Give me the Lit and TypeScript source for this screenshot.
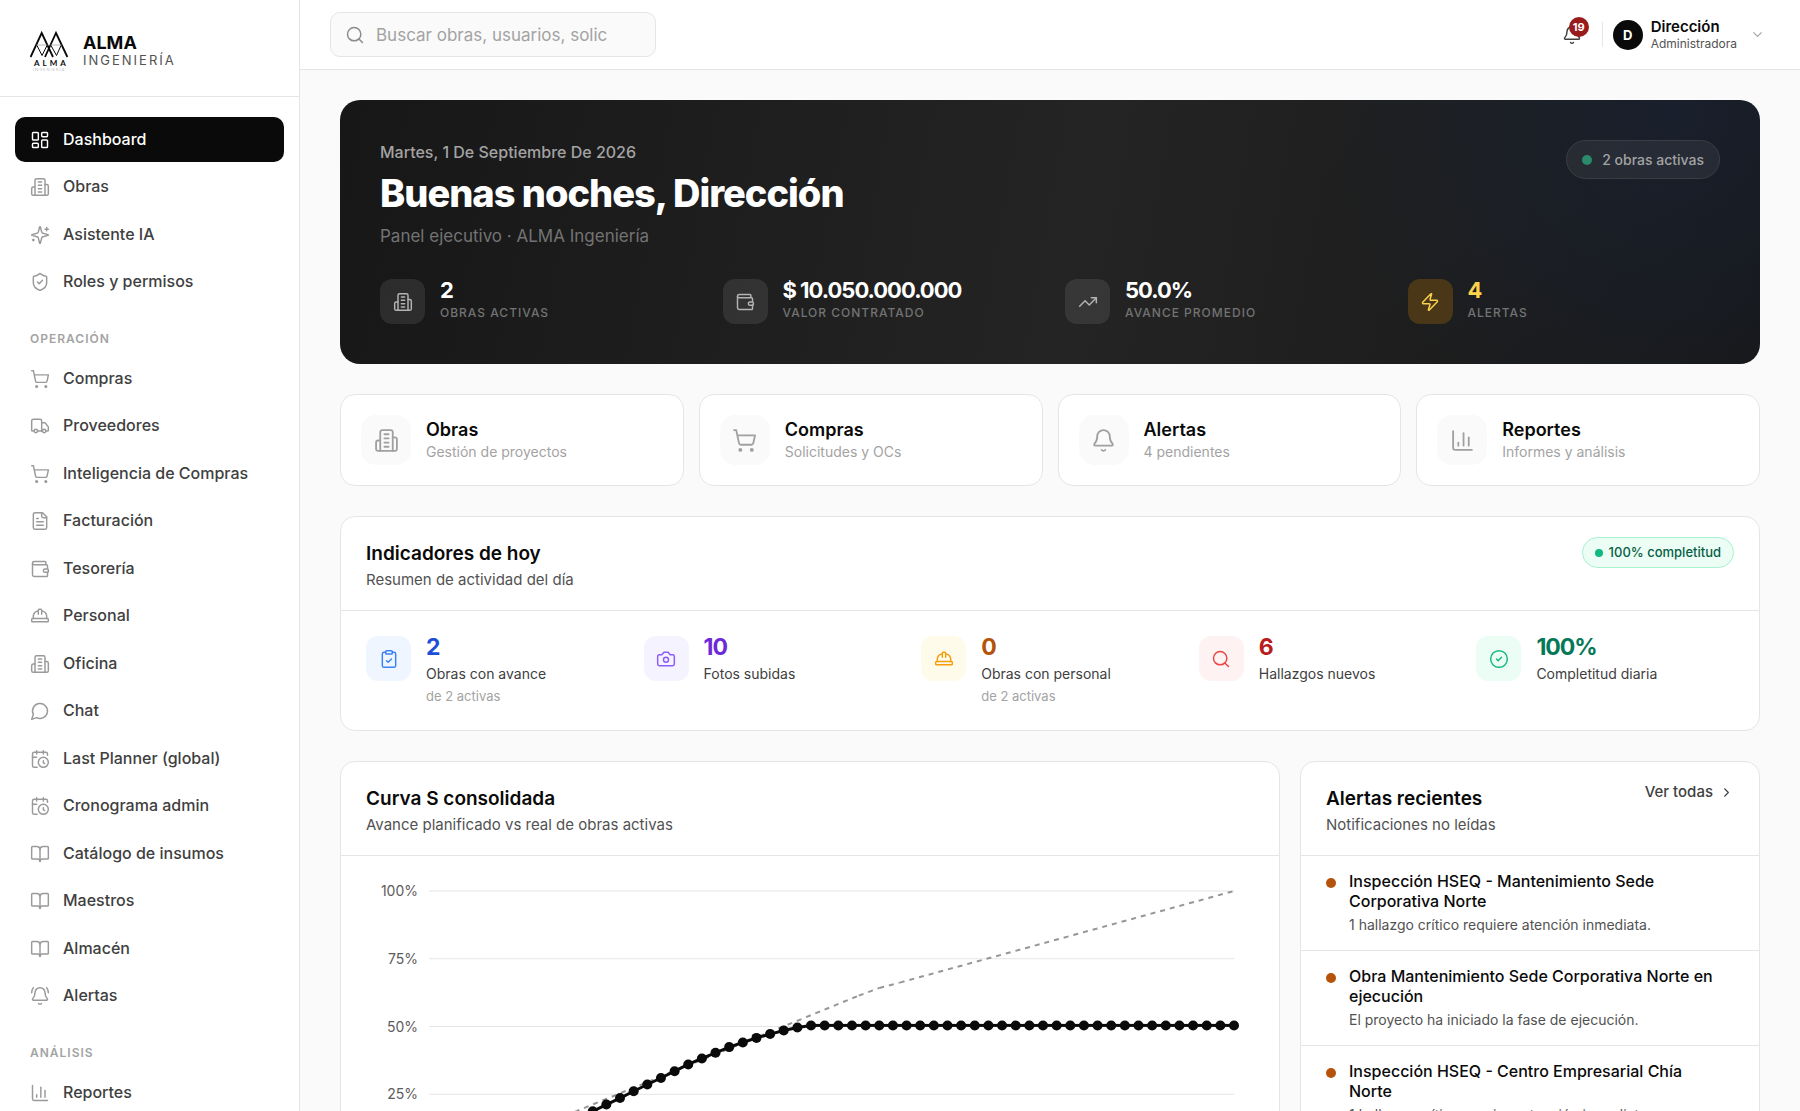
import { LitElement, html, css, svg, nothing } from "lit";
import { customElement, state } from "lit/decorators.js";
import { classMap } from "lit/directives/class-map.js";

/* ---------- Icons (24 × 24 outline set) ---------- */

const icons: Record<string, unknown> = {
  dashboard: svg`<rect width="7" height="9" x="3" y="3" rx="1"/><rect width="7" height="5" x="14" y="3" rx="1"/><rect width="7" height="9" x="14" y="12" rx="1"/><rect width="7" height="5" x="3" y="16" rx="1"/>`,
  building: svg`<path d="M6 22V4a2 2 0 0 1 2-2h8a2 2 0 0 1 2 2v18Z"/><path d="M6 12H4a2 2 0 0 0-2 2v6a2 2 0 0 0 2 2h2"/><path d="M18 9h2a2 2 0 0 1 2 2v9a2 2 0 0 1-2 2h-2"/><path d="M10 6h4"/><path d="M10 10h4"/><path d="M10 14h4"/><path d="M10 18h4"/>`,
  sparkles: svg`<path d="M9.937 15.5A2 2 0 0 0 8.5 14.063l-6.135-1.582a.5.5 0 0 1 0-.962L8.5 9.936A2 2 0 0 0 9.937 8.5l1.582-6.135a.5.5 0 0 1 .963 0L14.063 8.5A2 2 0 0 0 15.5 9.937l6.135 1.581a.5.5 0 0 1 0 .964L15.5 14.063a2 2 0 0 0-1.437 1.437l-1.582 6.135a.5.5 0 0 1-.963 0z"/><path d="M20 3v4"/><path d="M22 5h-4"/><path d="M4 17v2"/><path d="M5 18H3"/>`,
  shield: svg`<path d="M20 13c0 5-3.5 7.5-7.66 8.95a1 1 0 0 1-.67-.01C7.5 20.5 4 18 4 13V6a1 1 0 0 1 1-1c2 0 4.5-1.2 6.24-2.72a1.17 1.17 0 0 1 1.52 0C14.51 3.81 17 5 19 5a1 1 0 0 1 1 1z"/><path d="m9 12 2 2 4-4"/>`,
  cart: svg`<circle cx="8" cy="21" r="1"/><circle cx="19" cy="21" r="1"/><path d="M2.05 2.05h2l2.66 12.42a2 2 0 0 0 2 1.58h9.78a2 2 0 0 0 1.95-1.57l1.65-7.43H5.12"/>`,
  truck: svg`<path d="M14 18V6a2 2 0 0 0-2-2H4a2 2 0 0 0-2 2v11a1 1 0 0 0 1 1h2"/><path d="M15 18H9"/><path d="M19 18h2a1 1 0 0 0 1-1v-3.65a1 1 0 0 0-.22-.624l-3.48-4.35A1 1 0 0 0 17.52 8H14"/><circle cx="17" cy="18" r="2"/><circle cx="7" cy="18" r="2"/>`,
  file: svg`<path d="M15 2H6a2 2 0 0 0-2 2v16a2 2 0 0 0 2 2h12a2 2 0 0 0 2-2V7Z"/><path d="M14 2v4a2 2 0 0 0 2 2h4"/><path d="M10 9H8"/><path d="M16 13H8"/><path d="M16 17H8"/>`,
  wallet: svg`<path d="M19 7V4a1 1 0 0 0-1-1H5a2 2 0 0 0 0 4h15a1 1 0 0 1 1 1v4h-3a2 2 0 0 0 0 4h3a1 1 0 0 0 1-1v-2a1 1 0 0 0-1-1"/><path d="M3 5v14a2 2 0 0 0 2 2h15a1 1 0 0 0 1-1v-4"/>`,
  hardhat: svg`<path d="M10 10V5a1 1 0 0 1 1-1h2a1 1 0 0 1 1 1v5"/><path d="M14 6a6 6 0 0 1 6 6v3"/><path d="M4 15v-3a6 6 0 0 1 6-6"/><rect x="2" y="15" width="20" height="4" rx="1"/>`,
  chat: svg`<path d="M7.9 20A9 9 0 1 0 4 16.1L2 22Z"/>`,
  calendar: svg`<path d="M21 7.5V6a2 2 0 0 0-2-2H5a2 2 0 0 0-2 2v14a2 2 0 0 0 2 2h3.5"/><path d="M16 2v4"/><path d="M8 2v4"/><path d="M3 10h5"/><path d="M17.5 17.5 16 16.3V14"/><circle cx="16" cy="16" r="6"/>`,
  book: svg`<path d="M12 7v14"/><path d="M3 18a1 1 0 0 1-1-1V4a1 1 0 0 1 1-1h5a4 4 0 0 1 4 4 4 4 0 0 1 4-4h5a1 1 0 0 1 1 1v13a1 1 0 0 1-1 1h-6a3 3 0 0 0-3 3 3 3 0 0 0-3-3z"/>`,
  bellring: svg`<path d="M10.268 21a2 2 0 0 0 3.464 0"/><path d="M22 8c0-2.3-.8-4.3-2-6"/><path d="M3.262 15.326A1 1 0 0 0 4 17h16a1 1 0 0 0 .74-1.673C19.41 13.956 18 12.499 18 8A6 6 0 0 0 6 8c0 4.499-1.411 5.956-2.738 7.326"/><path d="M4 2C2.8 3.7 2 5.7 2 8"/>`,
  bell: svg`<path d="M10.268 21a2 2 0 0 0 3.464 0"/><path d="M3.262 15.326A1 1 0 0 0 4 17h16a1 1 0 0 0 .74-1.673C19.41 13.956 18 12.499 18 8A6 6 0 0 0 6 8c0 4.499-1.411 5.956-2.738 7.326"/>`,
  chart: svg`<path d="M3 3v16a2 2 0 0 0 2 2h16"/><path d="M18 17V9"/><path d="M13 17V5"/><path d="M8 17v-3"/>`,
  search: svg`<circle cx="11" cy="11" r="8"/><path d="m21 21-4.3-4.3"/>`,
  trend: svg`<path d="M16 7h6v6"/><path d="m22 7-8.5 8.5-5-5L2 17"/>`,
  zap: svg`<path d="M4 14a1 1 0 0 1-.78-1.63l9.9-10.2a.5.5 0 0 1 .86.46l-1.92 6.02A1 1 0 0 0 13 10h7a1 1 0 0 1 .78 1.63l-9.9 10.2a.5.5 0 0 1-.86-.46l1.92-6.02A1 1 0 0 0 11 14z"/>`,
  clipboard: svg`<rect width="8" height="4" x="8" y="2" rx="1"/><path d="M16 4h2a2 2 0 0 1 2 2v14a2 2 0 0 1-2 2H6a2 2 0 0 1-2-2V6a2 2 0 0 1 2-2h2"/><path d="m9 14 2 2 4-4"/>`,
  camera: svg`<path d="M14.5 4h-5L7 7H4a2 2 0 0 0-2 2v9a2 2 0 0 0 2 2h16a2 2 0 0 0 2-2V9a2 2 0 0 0-2-2h-3l-2.500-3z"/><circle cx="12" cy="13" r="3"/>`,
  check: svg`<circle cx="12" cy="12" r="10"/><path d="m9 12 2 2 4-4"/>`,
  down: svg`<path d="m6 9 6 6 6-6"/>`,
  right: svg`<path d="m9 18 6-6-6-6"/>`,
};

const icon = (name: string, size = "md") => html`
  <svg class="icon icon-${size}" viewBox="0 0 24 24" aria-hidden="true">${icons[name]}</svg>
`;

/* ---------- Data ---------- */

interface NavItem { label: string; icon: string; }
interface NavGroup { title?: string; items: NavItem[]; }

const NAV: NavGroup[] = [
  {
    items: [
      { label: "Dashboard", icon: "dashboard" },
      { label: "Obras", icon: "building" },
      { label: "Asistente IA", icon: "sparkles" },
      { label: "Roles y permisos", icon: "shield" },
    ],
  },
  {
    title: "Operación",
    items: [
      { label: "Compras", icon: "cart" },
      { label: "Proveedores", icon: "truck" },
      { label: "Inteligencia de Compras", icon: "cart" },
      { label: "Facturación", icon: "file" },
      { label: "Tesorería", icon: "wallet" },
      { label: "Personal", icon: "hardhat" },
      { label: "Oficina", icon: "building" },
      { label: "Chat", icon: "chat" },
      { label: "Last Planner (global)", icon: "calendar" },
      { label: "Cronograma admin", icon: "calendar" },
      { label: "Catálogo de insumos", icon: "book" },
      { label: "Maestros", icon: "book" },
      { label: "Almacén", icon: "book" },
      { label: "Alertas", icon: "bellring" },
    ],
  },
  { title: "Análisis", items: [{ label: "Reportes", icon: "chart" }] },
];

const STATS = [
  { value: "2", label: "Obras activas", icon: "building", warn: false },
  { value: "$ 10.050.000.000", label: "Valor contratado", icon: "wallet", warn: false },
  { value: "50.0%", label: "Avance promedio", icon: "trend", warn: false },
  { value: "4", label: "Alertas", icon: "zap", warn: true },
];

const QUICK = [
  { title: "Obras", text: "Gestión de proyectos", icon: "building" },
  { title: "Compras", text: "Solicitudes y OCs", icon: "cart" },
  { title: "Alertas", text: "4 pendientes", icon: "bell" },
  { title: "Reportes", text: "Informes y análisis", icon: "chart" },
];

const KPIS = [
  { value: "2", label: "Obras con avance", note: "de 2 activas", icon: "clipboard", tone: "blue" },
  { value: "10", label: "Fotos subidas", note: "", icon: "camera", tone: "violet" },
  { value: "0", label: "Obras con personal", note: "de 2 activas", icon: "hardhat", tone: "amber" },
  { value: "6", label: "Hallazgos nuevos", note: "", icon: "search", tone: "red" },
  { value: "100%", label: "Completitud diaria", note: "", icon: "check", tone: "green" },
];

const ALERTS = [
  { title: "Inspección HSEQ - Mantenimiento Sede Corporativa Norte", text: "1 hallazgo crítico requiere atención inmediata." },
  { title: "Obra Mantenimiento Sede Corporativa Norte en ejecución", text: "El proyecto ha iniciado la fase de ejecución." },
  { title: "Inspección HSEQ - Centro Empresarial Chía Norte", text: "1 hallazgo crítico requiere atención inmediata." },
];

const TICKS = [100, 75, 50, 25];

/* Accumulated progress (%) per period; it holds steady after the last report. */
const REAL = [
  0, 1, 2, 3, 4, 6, 7, 9, 11, 12, 14, 16, 18.7, 21.2, 23.6, 26.1, 28.6, 31, 33.5, 36, 38.2, 40.3,
  42.4, 44.1, 45.8, 47.2, 48.5, 49.6, 50.4,
];
const PERIODS = 59;
while (REAL.length <= PERIODS) REAL.push(50.4);

/* Planned curve as [period, %] knots. */
const PLAN: [number, number][] = [[0, 0], [10, 17.1], [31.5, 61.4], [33, 64.2], [34.5, 66.2], [59, 100]];

/* ---------- Progress chart ---------- */

@customElement("progress-chart")
export class ProgressChart extends LitElement {
  static styles = css`
    :host {
      display: block;
      padding-top: 10px;
    }
    .chart {
      display: grid;
      grid-template-columns: 52px 1fr;
      column-gap: 11px;
      padding-right: 20px;
    }
    .axis {
      display: grid;
      grid-auto-rows: 1fr;
      margin-top: -10px;
      height: 271px;
      color: #5c5c5c;
      font-size: 14px;
      line-height: 20px;
      text-align: right;
    }
    .plot {
      display: block;
      width: 100%;
      height: 271px;
      overflow: visible;
    }
    .grid {
      stroke: #e5e5e5;
      stroke-width: 1;
    }
    .plan {
      stroke: #969696;
      stroke-width: 2;
      stroke-dasharray: 5 5;
    }
    .real {
      stroke: #0a0a0a;
      stroke-width: 3;
    }
    .dot {
      fill: #0a0a0a;
    }
  `;

  private x = (i: number) => `${(i / PERIODS) * 100}%`;
  private y = (v: number) => `${100 - v}%`;

  render() {
    return html`
      <div class="chart">
        <div class="axis">${TICKS.map((t) => html`<span>${t}%</span>`)}</div>
        <svg class="plot" role="img" aria-label="Curva S consolidada">
          ${[...TICKS, 0].map((t) => svg`<line class="grid" x1="0" x2="100%" y1=${this.y(t)} y2=${this.y(t)} />`)}
          ${PLAN.slice(1).map(([i, v], k) => svg`
            <line class="plan" x1=${this.x(PLAN[k][0])} y1=${this.y(PLAN[k][1])} x2=${this.x(i)} y2=${this.y(v)} />`)}
          ${REAL.slice(1).map((v, k) => svg`
            <line class="real" x1=${this.x(k)} y1=${this.y(REAL[k])} x2=${this.x(k + 1)} y2=${this.y(v)} />`)}
          ${REAL.map((v, i) => svg`<circle class="dot" cx=${this.x(i)} cy=${this.y(v)} r="5" />`)}
        </svg>
      </div>
    `;
  }
}

/* ---------- Application shell ---------- */

@customElement("app-root")
export class AppRoot extends LitElement {
  @state() private current = "Dashboard";

  static styles = css`
    :host {
      display: block;
      color: #0a0a0a;
      font-family: Inter, "Liberation Sans", sans-serif;
      font-size: 16px;
      line-height: 20px;
      --line: #e5e5e5;
      --muted: #a3a3a3;
      --soft: #525252;
    }
    * {
      box-sizing: border-box;
    }
    h1, h2, h3, p, ul {
      margin: 0;
      padding: 0;
      font-size: inherit;
      font-weight: inherit;
    }
    ul {
      list-style: none;
    }
    a {
      color: inherit;
      text-decoration: none;
    }
    button {
      margin: 0;
      padding: 0;
      border: 0;
      background: none;
      color: inherit;
      font: inherit;
      text-align: left;
      cursor: pointer;
    }
    .icon {
      flex: none;
      display: block;
      fill: none;
      stroke: currentColor;
      stroke-width: 1.75;
      stroke-linecap: round;
      stroke-linejoin: round;
    }
    .icon-xs { width: 15px; height: 15px; }
    .icon-md { width: 20px; height: 20px; }
    .icon-lg { width: 25px; height: 25px; }

    .shell {
      display: grid;
      grid-template-columns: 300px minmax(0, 1fr);
      height: 100vh;
      background: #fafafa;
    }

    /* Sidebar */
    .sidebar {
      display: flex;
      flex-direction: column;
      min-height: 0;
      border-right: 1px solid var(--line);
      background: #fff;
    }
    .brand {
      display: flex;
      align-items: center;
      gap: 13px;
      padding: 29px 30px 28px;
      border-bottom: 1px solid var(--line);
    }
    .logo {
      display: block;
      width: 40px;
      height: 36px;
      overflow: visible;
    }
    .brand-name {
      padding-top: 4px;
      font-size: 18px;
      font-weight: 700;
      line-height: 20px;
    }
    .brand-sub {
      color: var(--soft);
      font-size: 13px;
      line-height: 15px;
      letter-spacing: 2px;
    }
    .nav {
      flex: 1;
      min-height: 0;
      padding: 20px 15px;
      overflow-y: auto;
      scrollbar-width: none;
    }
    .nav-title {
      margin: 25px 0 7px;
      padding: 0 15px;
      color: var(--muted);
      font-size: 12px;
      font-weight: 600;
      line-height: 20px;
      letter-spacing: 1px;
      text-transform: uppercase;
    }
    .nav-list li:nth-child(even) { padding-top: 2px; }
    .nav-list li:nth-child(odd):not(:first-child) { padding-top: 3px; }
    .nav-item {
      display: flex;
      align-items: center;
      gap: 13px;
      height: 45px;
      padding: 0 15px;
      border-radius: 10px;
      color: #404040;
      font-weight: 500;
    }
    .nav-label { padding-bottom: 2px; }
    .nav-item .icon { color: #9a9a9a; }
    .nav-item.active { background: #0a0a0a; color: #fff; }
    .nav-item.active .icon { color: #fff; }

    /* Top bar */
    .main {
      display: flex;
      flex-direction: column;
      min-width: 0;
      min-height: 0;
    }
    .topbar {
      flex: none;
      display: flex;
      align-items: center;
      justify-content: space-between;
      height: 70px;
      padding: 0 30px;
      border-bottom: 1px solid var(--line);
      background: #fff;
    }
    .search {
      display: flex;
      align-items: center;
      gap: 11px;
      width: 326px;
      height: 45px;
      padding: 0 40px 0 14px;
      border: 1px solid var(--line);
      border-radius: 10px;
      background: #fafafa;
      color: #8a8a8a;
    }
    .search-input {
      flex: 1;
      min-width: 0;
      padding: 0;
      border: 0;
      outline: 0;
      background: none;
      color: #0a0a0a;
      font: inherit;
      font-size: 17px;
    }
    .search-input::placeholder { color: var(--muted); opacity: 1; }
    .tools {
      display: flex;
      align-items: center;
    }
    .bell {
      position: relative;
      padding: 12px;
      color: #404040;
    }
    .bell-count {
      position: absolute;
      top: 4px;
      right: 5px;
      min-width: 20px;
      border-radius: 10px;
      background: #991b1b;
      color: #fff;
      font-size: 11px;
      font-weight: 700;
      text-align: center;
    }
    .divider {
      width: 1px;
      height: 25px;
      margin: 0 10px 0 8px;
      background: var(--line);
    }
    .user {
      display: flex;
      align-items: center;
      gap: 8px;
      padding-right: 5px;
    }
    .avatar {
      width: 30px;
      border-radius: 50%;
      background: #0a0a0a;
      color: #fff;
      font-size: 13px;
      font-weight: 700;
      line-height: 30px;
      text-align: center;
    }
    .user-name {
      display: block;
      font-size: 15px;
      font-weight: 600;
      line-height: 18px;
    }
    .user-role {
      display: block;
      color: var(--soft);
      font-size: 12px;
      line-height: 16px;
    }
    .user .icon { margin-left: 5px; color: var(--muted); }

    /* Page */
    .page {
      flex: 1;
      display: flex;
      flex-direction: column;
      gap: 30px;
      min-height: 0;
      padding: 30px 40px;
      overflow-y: auto;
      scrollbar-width: none;
    }
    .page > * { flex: none; }

    .hero {
      display: flex;
      flex-direction: column;
      gap: 31px;
      padding: 40px;
      border-radius: 20px;
      background:
        radial-gradient(circle at 94% 4%, rgba(24, 44, 84, 0.32), transparent 360px),
        linear-gradient(100deg, #171717 0%, #242424 52%, #171717 100%);
      color: #fff;
    }
    .hero-top {
      display: flex;
      align-items: flex-start;
      justify-content: space-between;
    }
    .hero-date {
      color: #a3a3a3;
      font-weight: 500;
      line-height: 24px;
    }
    .hero-title {
      margin: 7px 0 9px;
      font-size: 38px;
      font-weight: 800;
      line-height: 44px;
      letter-spacing: -1px;
    }
    .hero-sub {
      color: #737373;
      font-size: 17px;
      line-height: 24px;
    }
    .hero-badge {
      display: flex;
      align-items: center;
      gap: 10px;
      padding: 8px 15px;
      border: 1px solid #3a3d43;
      border-radius: 20px;
      background: rgba(255, 255, 255, 0.06);
      color: #a3a3a3;
      font-size: 14px;
      font-weight: 500;
      line-height: 21px;
    }
    .hero-dot {
      width: 10px;
      height: 10px;
      border-radius: 50%;
      background: #2a8a69;
    }
    .stats {
      display: grid;
      grid-template-columns: repeat(4, minmax(0, 1fr));
      gap: 30px;
    }
    .stat {
      display: flex;
      align-items: flex-start;
      gap: 15px;
    }
    .tile {
      flex: none;
      display: grid;
      place-items: center;
      width: 45px;
      height: 45px;
      border-radius: 12px;
    }
    .stat .tile { background: rgba(255, 255, 255, 0.09); color: #b4b4b4; }
    .stat-value {
      font-size: 22px;
      font-weight: 700;
      line-height: 22px;
      letter-spacing: -1px;
    }
    .stat-label {
      color: #737373;
      font-size: 12px;
      font-weight: 500;
      line-height: 23px;
      letter-spacing: 1px;
      text-transform: uppercase;
    }
    .stat.warn .tile { background: #493718; color: #fcd34d; }
    .stat.warn .stat-value { color: #fcd34d; }

    .quick {
      display: grid;
      grid-template-columns: repeat(4, minmax(0, 1fr));
      gap: 15px;
    }
    .card {
      border: 1px solid var(--line);
      border-radius: 15px;
      background: #fff;
    }
    .quick-card {
      display: flex;
      align-items: center;
      gap: 15px;
      padding: 20px;
    }
    .quick-tile {
      flex: none;
      display: grid;
      place-items: center;
      width: 50px;
      height: 50px;
      border-radius: 15px;
      background: #fafafa;
      color: #a0a0a0;
    }
    .quick-title {
      font-size: 18px;
      font-weight: 600;
      line-height: 24px;
    }
    .quick-text {
      color: var(--muted);
      font-size: 14px;
    }

    .card-head {
      display: flex;
      align-items: flex-start;
      justify-content: space-between;
      padding: 20px 25px;
      border-bottom: 1px solid var(--line);
    }
    .card-title {
      font-size: 19px;
      font-weight: 600;
      line-height: 33px;
    }
    .card-sub {
      color: var(--soft);
      font-size: 15px;
      line-height: 20px;
    }
    .badge {
      display: flex;
      align-items: center;
      gap: 6px;
      padding: 4px 12px;
      border: 1px solid #a7f3d0;
      border-radius: 16px;
      background: #ecfdf5;
      color: #065f46;
      font-size: 13px;
      font-weight: 500;
      line-height: 21px;
    }
    .badge-dot {
      width: 8px;
      height: 8px;
      border-radius: 50%;
      background: #10b981;
    }
    .kpis {
      display: grid;
      grid-template-columns: repeat(5, minmax(0, 1fr));
      gap: 20px;
      padding: 25px;
    }
    .kpi {
      display: flex;
      align-items: flex-start;
      gap: 15px;
    }
    .kpi-value {
      font-size: 23px;
      font-weight: 700;
      line-height: 22px;
      letter-spacing: -1px;
    }
    .kpi-label {
      margin-top: 5px;
      color: #404040;
      font-size: 14px;
      line-height: 22px;
    }
    .kpi-note {
      margin-top: 2px;
      color: var(--muted);
      font-size: 13px;
      line-height: 18px;
    }
    .blue .tile { background: #eff6ff; color: #3b82f6; }
    .blue .kpi-value { color: #1d4ed8; }
    .violet .tile { background: #f5f3ff; color: #8b5cf6; }
    .violet .kpi-value { color: #6d28d9; }
    .amber .tile { background: #fffbeb; color: #f59e0b; }
    .amber .kpi-value { color: #b45309; }
    .red .tile { background: #fef2f2; color: #ef4444; }
    .red .kpi-value { color: #b91c1c; }
    .green .tile { background: #ecfdf5; color: #10b981; }
    .green .kpi-value { color: #047857; }

    .columns {
      display: grid;
      grid-template-columns: repeat(3, minmax(0, 1fr));
      gap: 20px;
      align-items: start;
    }
    .wide { grid-column: span 2; }
    .card-body { padding: 25px; }
    .more {
      display: flex;
      align-items: center;
      gap: 6px;
      color: #404040;
      font-size: 15px;
      font-weight: 500;
    }
    .alert {
      display: flex;
      align-items: flex-start;
      gap: 13px;
      padding: 15px 35px 15px 25px;
    }
    .alert + .alert { border-top: 1px solid var(--line); }
    .alert-dot {
      flex: none;
      width: 10px;
      height: 10px;
      margin-top: 7px;
      border-radius: 50%;
      background: #b45309;
    }
    .alert-title { font-weight: 500; }
    .alert-text {
      margin-top: 4px;
      color: var(--soft);
      font-size: 14px;
    }
  `;

  private renderLogo() {
    return html`
      <svg class="logo" viewBox="0 0 40 36" role="img" aria-label="ALMA">
        <g fill="none" stroke="#0a0a0a" stroke-width="1.8">
          <path d="M.6 26 11.700 2 23 26" />
          <path d="M15 26 26 2 37.400 26" />
          <path stroke-width="1" d="M7 14.500 12 24.500 17 14.500M21 14.500l5.500 10L31 14.500" />
          <path stroke-width=".5" stroke="#777" d="M6 14h12M20 14h12" />
        </g>
        <text x="4" y="35" font-family="Lato, sans-serif" font-size="8" font-weight="700" letter-spacing="3" fill="#0a0a0a">ALMA</text>
        <text x="3" y="40" font-family="Lato, sans-serif" font-size="4" letter-spacing="1" fill="#c4c4c4">INGENIERÍA</text>
      </svg>
    `;
  }

  private renderSidebar() {
    return html`
      <aside class="sidebar">
        <div class="brand">
          ${this.renderLogo()}
          <div>
            <p class="brand-name">ALMA</p>
            <p class="brand-sub">INGENIERÍA</p>
          </div>
        </div>
        <nav class="nav">
          ${NAV.map((group) => html`
            ${group.title ? html`<h2 class="nav-title">${group.title}</h2>` : nothing}
            <ul class="nav-list">
              ${group.items.map((item) => html`
                <li>
                  <a
                    href="#"
                    class=${classMap({ "nav-item": true, active: item.label === this.current })}
                    @click=${(e: Event) => { e.preventDefault(); this.current = item.label; }}
                  >${icon(item.icon)}<span class="nav-label">${item.label}</span></a>
                </li>
              `)}
            </ul>
          `)}
        </nav>
      </aside>
    `;
  }

  private renderTopbar() {
    return html`
      <header class="topbar">
        <label class="search">
          ${icon("search")}
          <input class="search-input" type="text" aria-label="Buscar" placeholder="Buscar obras, usuarios, solic" />
        </label>
        <div class="tools">
          <button class="bell" type="button" aria-label="Notificaciones">
            ${icon("bell")}<span class="bell-count">19</span>
          </button>
          <span class="divider"></span>
          <button class="user" type="button">
            <span class="avatar">D</span>
            <span>
              <span class="user-name">Dirección</span>
              <span class="user-role">Administradora</span>
            </span>
            ${icon("down", "xs")}
          </button>
        </div>
      </header>
    `;
  }

  private renderHero() {
    return html`
      <section class="hero">
        <div class="hero-top">
          <div>
            <p class="hero-date">Martes, 1 De Septiembre De 2026</p>
            <h1 class="hero-title">Buenas noches, Dirección</h1>
            <p class="hero-sub">Panel ejecutivo · ALMA Ingeniería</p>
          </div>
          <p class="hero-badge"><span class="hero-dot"></span>2 obras activas</p>
        </div>
        <div class="stats">
          ${STATS.map((s) => html`
            <div class=${classMap({ stat: true, warn: s.warn })}>
              <span class="tile">${icon(s.icon)}</span>
              <div>
                <p class="stat-value">${s.value}</p>
                <p class="stat-label">${s.label}</p>
              </div>
            </div>
          `)}
        </div>
      </section>
    `;
  }

  private renderHead(title: string, sub: string, extra: unknown = nothing) {
    return html`
      <header class="card-head">
        <div>
          <h2 class="card-title">${title}</h2>
          <p class="card-sub">${sub}</p>
        </div>
        ${extra}
      </header>
    `;
  }

  render() {
    return html`
      <div class="shell">
        ${this.renderSidebar()}
        <div class="main">
          ${this.renderTopbar()}
          <main class="page">
            ${this.renderHero()}

            <section class="quick">
              ${QUICK.map((q) => html`
                <a class="card quick-card" href="#">
                  <span class="quick-tile">${icon(q.icon, "lg")}</span>
                  <div>
                    <h3 class="quick-title">${q.title}</h3>
                    <p class="quick-text">${q.text}</p>
                  </div>
                </a>
              `)}
            </section>

            <section class="card">
              ${this.renderHead("Indicadores de hoy", "Resumen de actividad del día",
                html`<p class="badge"><span class="badge-dot"></span>100% completitud</p>`)}
              <div class="kpis">
                ${KPIS.map((k) => html`
                  <div class="kpi ${k.tone}">
                    <span class="tile">${icon(k.icon)}</span>
                    <div>
                      <p class="kpi-value">${k.value}</p>
                      <p class="kpi-label">${k.label}</p>
                      ${k.note ? html`<p class="kpi-note">${k.note}</p>` : nothing}
                    </div>
                  </div>
                `)}
              </div>
            </section>

            <div class="columns">
              <section class="card wide">
                ${this.renderHead("Curva S consolidada", "Avance planificado vs real de obras activas")}
                <div class="card-body"><progress-chart></progress-chart></div>
              </section>
              <section class="card">
                ${this.renderHead("Alertas recientes", "Notificaciones no leídas",
                  html`<a class="more" href="#">Ver todas ${icon("right", "xs")}</a>`)}
                <ul>
                  ${ALERTS.map((a) => html`
                    <li class="alert">
                      <span class="alert-dot"></span>
                      <div>
                        <h3 class="alert-title">${a.title}</h3>
                        <p class="alert-text">${a.text}</p>
                      </div>
                    </li>
                  `)}
                </ul>
              </section>
            </div>
          </main>
        </div>
      </div>
    `;
  }
}
